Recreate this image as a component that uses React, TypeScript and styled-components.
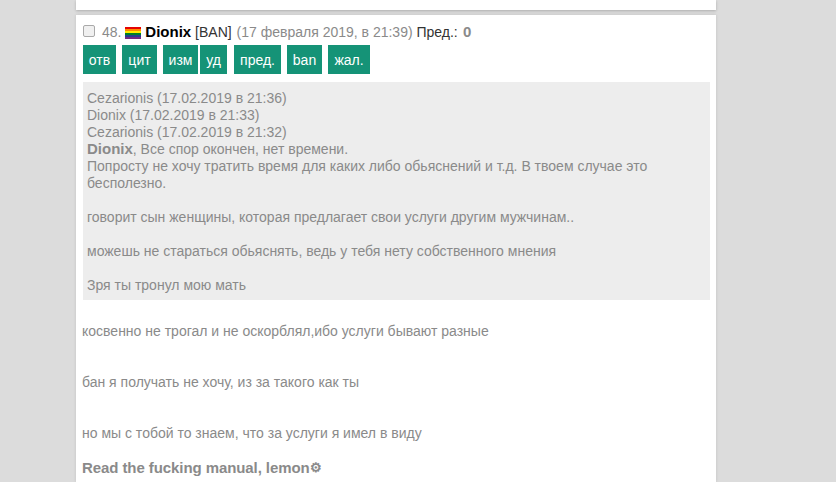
import { createGlobalStyle } from 'styled-components';
import styled from 'styled-components';

const GlobalStyle = createGlobalStyle`
  html, body {
    margin: 0;
    height: 482px;
    overflow: hidden;
    background: #dcdcdc;
    font-family: "Liberation Sans", Arial, sans-serif;
    font-size: 14px;
    color: #8a8a8a;
  }
  b {
    font-size: 15px;
    line-height: 1;
  }
`;

const Page = styled.div`
  width: 640px;
  margin-left: 76px;
  display: flex;
  flex-direction: column;
  gap: 5px;
`;

const PrevPost = styled.div`
  height: 10px;
  background: #fff;
  box-shadow: 0 1px 3px rgba(0, 0, 0, 0.22);
`;

const Post = styled.article`
  background: #fff;
  padding: 7px 6px 0 7px;
  box-shadow: 0 0 3px rgba(0, 0, 0, 0.12);
  height: 460px;
`;

const Header = styled.div`
  display: flex;
  align-items: baseline;
  height: 20px;
  line-height: 20px;
  white-space: pre;
`;

const Check = styled.input`
  appearance: none;
  box-sizing: border-box;
  align-self: center;
  width: 12px;
  height: 12px;
  margin: 0 7px 3px 0;
  background: #f0f0f0;
  border: 1px solid #a9a9a9;
  border-radius: 2px;
`;

const Name = styled.b`
  color: #000;
`;

const Ban = styled.span<{ $gap?: number }>`
  color: #333;
  margin-right: ${p => p.$gap ?? 0}px;
`;

const Flag = styled.svg`
  align-self: center;
  width: 16px;
  height: 12px;
  margin-right: 4px;
  margin-top: 2px;
`;

const Zero = styled.b`
  margin-left: 1px;
`;

const Buttons = styled.div`
  display: flex;
  margin-top: 3px;
`;

const Btn = styled.span<{ $gap: number; $w: number }>`
  display: flex;
  align-items: center;
  justify-content: center;
  width: ${p => p.$w}px;
  height: 29px;
  margin-right: ${p => p.$gap}px;
  background: #159377;
  color: #fff;
  font-size: 14px;
`;

const Quote = styled.blockquote`
  margin: 8px 0 0 0;
  padding: 8px 4px 6px 4px;
  width: 627px;
  box-sizing: border-box;
  background: #ededed;
  line-height: 17px;
`;

const Body = styled.div`
  margin: 23px 0 0 -1px;
  line-height: 17px;
`;

const Para = styled.p`
  margin: 0 0 34px;
`;

const Signature = styled.b`
  display: flex;
  align-items: center;
  margin-top: -17px;
  height: 17px;
  letter-spacing: -0.08px;
`;

const Gear = styled.span`
  font-size: 13px;
  line-height: 17px;
`;

const stripes = ['#e40303', '#ff8c00', '#ffed00', '#008026', '#24408e', '#732982'];
const buttons = [
  { label: 'отв', w: 33, gap: 6 },
  { label: 'цит', w: 35, gap: 6 },
  { label: 'изм', w: 35, gap: 2 },
  { label: 'уд', w: 27, gap: 7 },
  { label: 'пред.', w: 47, gap: 6 },
  { label: 'ban', w: 35, gap: 6 },
  { label: 'жал.', w: 42, gap: 0 },
];

export default function App() {
  return (
    <>
      <GlobalStyle />
      <Page>
        <PrevPost />
        <Post>
          <Header>
            <Check type="checkbox" />
            <span>48. </span>
            <Flag viewBox="0 0 16 12">
              {stripes.map((c, i) => (
                <rect key={c} x="0" y={i * 2} width="16" height="2" fill={c} />
              ))}
            </Flag>
            <Name>Dionix</Name>
            <span> </span>
            <Ban $gap={1}>[BAN]</Ban>
            <span> (17 февраля 2019, в 21:39) </span>
            <Ban>Пред.:</Ban>
            <Zero> 0</Zero>
          </Header>
          <Buttons>
            {buttons.map(b => (
              <Btn key={b.label} $w={b.w} $gap={b.gap}>{b.label}</Btn>
            ))}
          </Buttons>
          <Quote>
            Cezarionis (17.02.2019 в 21:36)<br />
            Dionix (17.02.2019 в 21:33)<br />
            Cezarionis (17.02.2019 в 21:32)<br />
            <b>Dionix</b>, Все спор окончен, нет времени.<br />
            Попросту не хочу тратить время для каких либо обьяснений и т.д. В твоем случае это бесполезно.<br />
            <br />
            говорит сын женщины, которая предлагает свои услуги другим мужчинам..<br />
            <br />
            можешь не стараться обьяснять, ведь у тебя нету собственного мнения<br />
            <br />
            Зря ты тронул мою мать
          </Quote>
          <Body>
            <Para>косвенно не трогал и не оскорблял,ибо услуги бывают разные</Para>
            <Para>бан я получать не хочу, из за такого как ты</Para>
            <Para>но мы с тобой то знаем, что за услуги я имел в виду</Para>
            <Signature>Read the fucking manual, lemon<Gear>⚙</Gear></Signature>
          </Body>
        </Post>
      </Page>
    </>
  );
}
